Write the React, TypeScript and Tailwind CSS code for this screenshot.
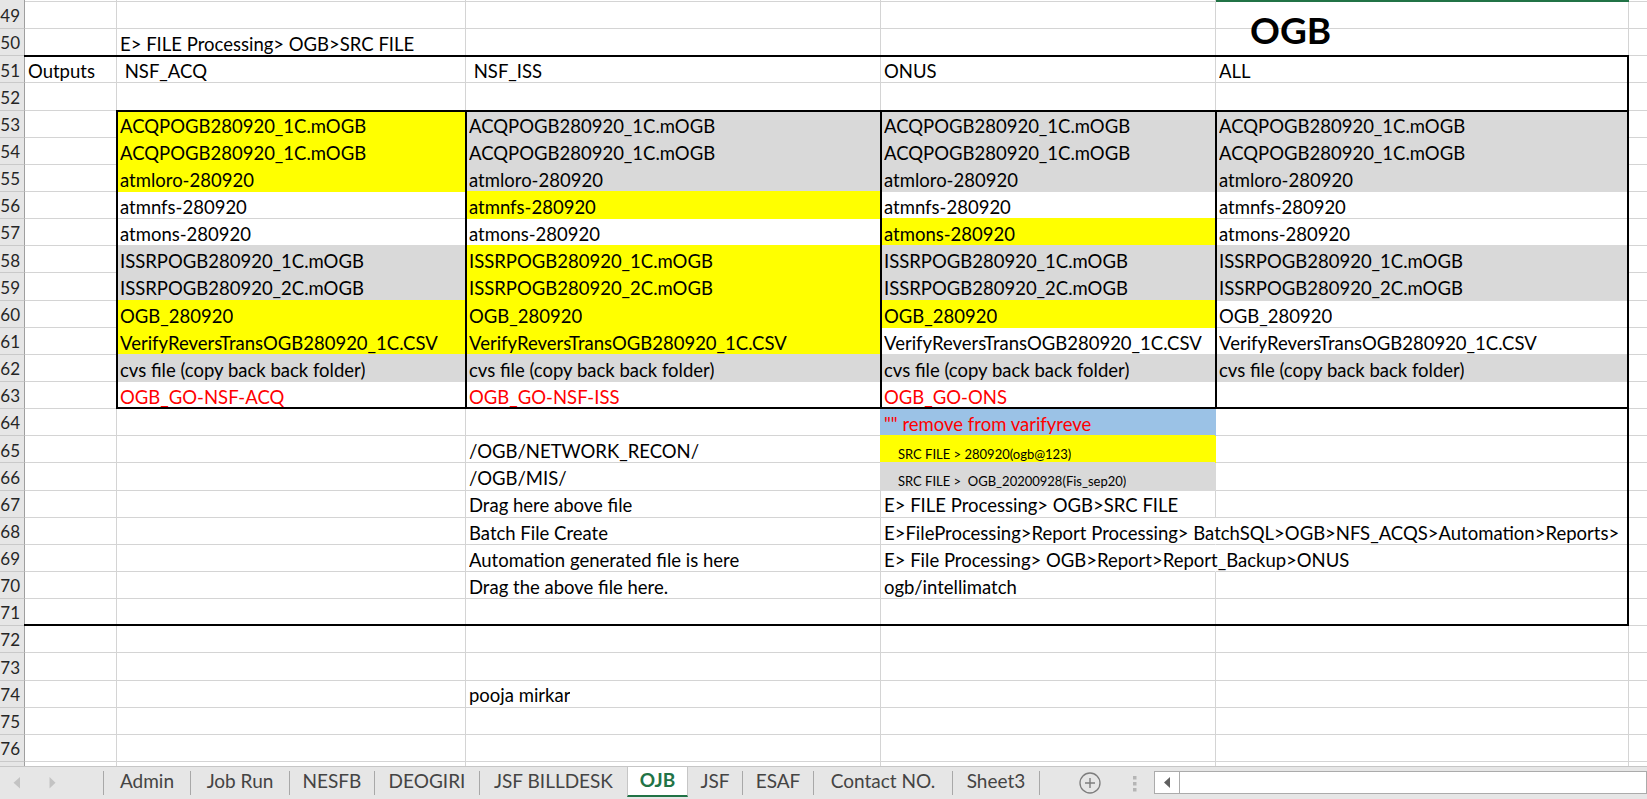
import React from "react";

type Col = "A" | "B" | "C" | "D" | "E";
type Fill = "y" | "g" | "b";

interface CellDef {
  text?: string;
  fill?: Fill;
  red?: boolean;
  small?: boolean;
  spill?: boolean;
}

const COLS: Col[] = ["A", "B", "C", "D", "E"];

const widthClass: Record<Col, string> = {
  A: "w-[92px]",
  B: "w-[349px]",
  C: "w-[415px]",
  D: "w-[335px]",
  E: "w-[413px]",
};

// filled cells hide the gridlines around them, like Excel does
const fillClass: Record<Fill, string> = {
  y: "bg-[#ffff00] border-b-[#ffff00] border-r-[#ffff00] shadow-[-1px_-1px_0_0_#ffff00]",
  g: "bg-[#d9d9d9] border-b-[#d9d9d9] border-r-[#d9d9d9] shadow-[-1px_-1px_0_0_#d9d9d9]",
  b: "bg-[#9bc2e6] border-b-[#9bc2e6] border-r-[#9bc2e6] shadow-[-1px_-1px_0_0_#9bc2e6]",
};

const FILES = [
  "ACQPOGB280920_1C.mOGB",
  "ACQPOGB280920_1C.mOGB",
  "atmloro-280920",
  "atmnfs-280920",
  "atmons-280920",
  "ISSRPOGB280920_1C.mOGB",
  "ISSRPOGB280920_2C.mOGB",
  "OGB_280920",
  "VerifyReversTransOGB280920_1C.CSV",
  "cvs file (copy back back folder)",
];

// one char per row 53..62: y = yellow, g = gray, . = none
const FILLS: Record<"B" | "C" | "D" | "E", string> = {
  B: "yyy..ggyyg",
  C: "gggy.yyyyg",
  D: "ggg.yggy.g",
  E: "ggg..gg..g",
};

function buildSheet() {
  const s: Record<number, Partial<Record<Col, CellDef>>> = {};
  const put = (r: number, c: Col, d: CellDef) => {
    s[r] = { ...s[r], [c]: d };
  };
  put(50, "B", { text: "E> FILE Processing> OGB>SRC FILE" });
  put(51, "A", { text: "Outputs" });
  put(51, "B", { text: " NSF_ACQ" });
  put(51, "C", { text: " NSF_ISS" });
  put(51, "D", { text: "ONUS" });
  put(51, "E", { text: "ALL" });
  (["B", "C", "D", "E"] as const).forEach((c) =>
    FILES.forEach((f, i) => {
      const ch = FILLS[c][i];
      put(53 + i, c, { text: f, fill: ch === "." ? undefined : (ch as Fill) });
    })
  );
  put(63, "B", { text: "OGB_GO-NSF-ACQ", red: true });
  put(63, "C", { text: "OGB_GO-NSF-ISS", red: true });
  put(63, "D", { text: "OGB_GO-ONS", red: true });
  put(64, "D", { text: '"" remove from varifyreve', fill: "b", red: true });
  put(65, "C", { text: "/OGB/NETWORK_RECON/" });
  put(65, "D", { text: "SRC FILE > 280920(ogb@123)", fill: "y", small: true });
  put(66, "C", { text: "/OGB/MIS/" });
  put(66, "D", { text: "SRC FILE >  OGB_20200928(Fis_sep20)", fill: "g", small: true });
  put(67, "C", { text: "Drag here above file" });
  put(67, "D", { text: "E> FILE Processing> OGB>SRC FILE" });
  put(68, "C", { text: "Batch File Create" });
  put(68, "D", {
    text: "E>FileProcessing>Report Processing> BatchSQL>OGB>NFS_ACQS>Automation>Reports>",
    spill: true,
  });
  put(69, "C", { text: "Automation generated file is here" });
  put(69, "D", { text: "E> File Processing> OGB>Report>Report_Backup>ONUS", spill: true });
  put(70, "C", { text: "Drag the above file here." });
  put(70, "D", { text: "ogb/intellimatch" });
  put(74, "C", { text: "pooja mirkar" });
  return s;
}

const SHEET = buildSheet();

// thick black borders: outer box rows 51-71, inner box rows 53-63 cols B-E
function edgesFor(row: number, col: Col) {
  let e = "";
  if (row === 51) e += "t";
  if (row === 71) e += "b";
  if (col === "E" && row >= 51 && row <= 71) e += "r";
  if (col !== "A" && row >= 53 && row <= 63) {
    e += "l";
    if (row === 53) e += "t";
    if (row === 63) e += "b";
  }
  return e;
}

function Cell({ row, col }: { row: number; col: Col }) {
  const def = SHEET[row]?.[col] ?? {};
  const edges = edgesFor(row, col);
  const lines = def.fill
    ? fillClass[def.fill]
    : def.spill
      ? "border-b-[#d4d4d4] border-r-transparent"
      : "border-b-[#d4d4d4] border-r-[#d4d4d4]";

  return (
    <div
      className={`relative flex shrink-0 items-end border-r border-b ${widthClass[col]} ${lines} ${
        def.small ? "pl-[17px]" : "pl-[3px]"
      }`}
    >
      {def.text && (
        <span
          className={`min-w-0 whitespace-pre leading-[1.2] ${
            def.spill ? "overflow-visible" : "overflow-hidden"
          } ${def.small ? "text-[13px]" : "text-[18.5px]"} ${
            def.red ? "text-[#ff0000]" : "text-black"
          }`}
        >
          {def.text}
        </span>
      )}
      {row === 49 && col === "E" && (
        <span className="absolute top-[9px] left-[34px] z-10 text-[37px] leading-none font-bold text-black">
          OGB
        </span>
      )}
      {edges.includes("t") && (
        <span className="absolute top-[-1px] right-[-1px] left-[-1px] z-10 h-[2px] bg-black" />
      )}
      {edges.includes("b") && (
        <span className="absolute right-[-1px] bottom-[-1px] left-[-1px] z-10 h-[2px] bg-black" />
      )}
      {edges.includes("l") && (
        <span className="absolute top-[-1px] bottom-[-1px] left-[-1px] z-10 w-[2px] bg-black" />
      )}
      {edges.includes("r") && (
        <span className="absolute top-[-1px] right-[-1px] bottom-[-1px] z-10 w-[2px] bg-black" />
      )}
    </div>
  );
}

function Row({ n }: { n: number }) {
  return (
    <div className="flex h-[27.15px] shrink-0">
      <div className="flex w-[25px] shrink-0 items-end justify-end overflow-hidden border-r border-b border-r-[#9f9f9f] border-b-[#c9c9c9] bg-[#e6e6e6] pr-[4px]">
        <span className="pb-[1.5px] text-[17px] leading-[1.2] text-[#262626]">{n}</span>
      </div>
      {COLS.map((c) => (
        <Cell key={c} row={n} col={c} />
      ))}
      <div className="flex-1 border-b border-[#d4d4d4]" />
    </div>
  );
}

const TABS = [
  { name: "Admin", w: "w-[87px]" },
  { name: "Job Run", w: "w-[99px]" },
  { name: "NESFB", w: "w-[85px]" },
  { name: "DEOGIRI", w: "w-[105px]" },
  { name: "JSF BILLDESK", w: "w-[148px]" },
  { name: "OJB", w: "w-[61px]", active: true },
  { name: "JSF", w: "w-[54px]", noSep: true },
  { name: "ESAF", w: "w-[71px]" },
  { name: "Contact NO.", w: "w-[139px]" },
  { name: "Sheet3", w: "w-[88px]", last: true },
];

function TabBar() {
  return (
    <div className="flex h-[33px] shrink-0 items-start border-t border-[#c6c6c6] bg-[#e6e6e6]">
      <svg width="103" height="32" className="shrink-0">
        <polygon points="20,10 13.5,15.7 20,21.5" fill="#c3c3c3" />
        <polygon points="49.5,10 55.5,15.7 49.5,21.5" fill="#c3c3c3" />
      </svg>
      {TABS.map((t) =>
        t.active ? (
          <div
            key={t.name}
            className={`flex h-[30px] shrink-0 justify-center border-x border-b-2 border-x-[#c6c6c6] border-b-[#217346] bg-white pt-[3px] ${t.w}`}
          >
            <span className="text-[19px] leading-none font-bold text-[#217346]">{t.name}</span>
          </div>
        ) : (
          <div
            key={t.name}
            className={`mt-[4px] flex h-[24px] shrink-0 justify-center border-[#a8a8a8] ${t.w} ${
              t.noSep ? "" : "border-l"
            } ${t.last ? "border-r" : ""}`}
          >
            <span className="text-[19px] leading-none text-[#444444]">{t.name}</span>
          </div>
        )
      )}
      <svg width="22" height="22" className="mt-[5px] ml-[39px] shrink-0">
        <circle cx="11" cy="11" r="10" fill="none" stroke="#7d7d7d" strokeWidth="1.3" />
        <path d="M11 6v10M6 11h10" stroke="#7d7d7d" strokeWidth="1.4" />
      </svg>
      <svg width="4" height="16" className="mt-[9px] ml-[32px] shrink-0">
        <rect x="0" y="0" width="3.5" height="3.5" fill="#b5b5b5" />
        <rect x="0" y="6" width="3.5" height="3.5" fill="#b5b5b5" />
        <rect x="0" y="12" width="3.5" height="3.5" fill="#b5b5b5" />
      </svg>
      <div className="mt-[4px] ml-[17px] flex h-[23px] flex-1 border border-[#ababab] bg-white">
        <div className="flex w-[25px] shrink-0 items-center justify-center border-r border-[#ababab]">
          <svg width="6" height="11">
            <polygon points="6,0 0,5.5 6,11" fill="#606060" />
          </svg>
        </div>
      </div>
    </div>
  );
}

export default function App() {
  const rows = Array.from({ length: 29 }, (_, i) => 49 + i);
  return (
    <div className="flex h-[799px] w-[1647px] flex-col overflow-hidden bg-white font-['Lato',sans-serif]">
      <div className="flex h-[766px] shrink-0 flex-col overflow-hidden">
        <div className="flex h-[2px] shrink-0">
          <div className="w-[25px] shrink-0 border-r border-[#9f9f9f] bg-[#e6e6e6]" />
          <div className="w-[92px] shrink-0 border-r border-b border-[#d4d4d4]" />
          <div className="w-[349px] shrink-0 border-r border-b border-[#d4d4d4]" />
          <div className="w-[415px] shrink-0 border-r border-b border-[#d4d4d4]" />
          <div className="w-[335px] shrink-0 border-r border-b border-[#d4d4d4]" />
          <div className="w-[413px] shrink-0 bg-[#217346]" />
          <div className="flex-1 border-b border-[#d4d4d4]" />
        </div>
        {rows.map((n) => (
          <Row key={n} n={n} />
        ))}
      </div>
      <TabBar />
    </div>
  );
}
